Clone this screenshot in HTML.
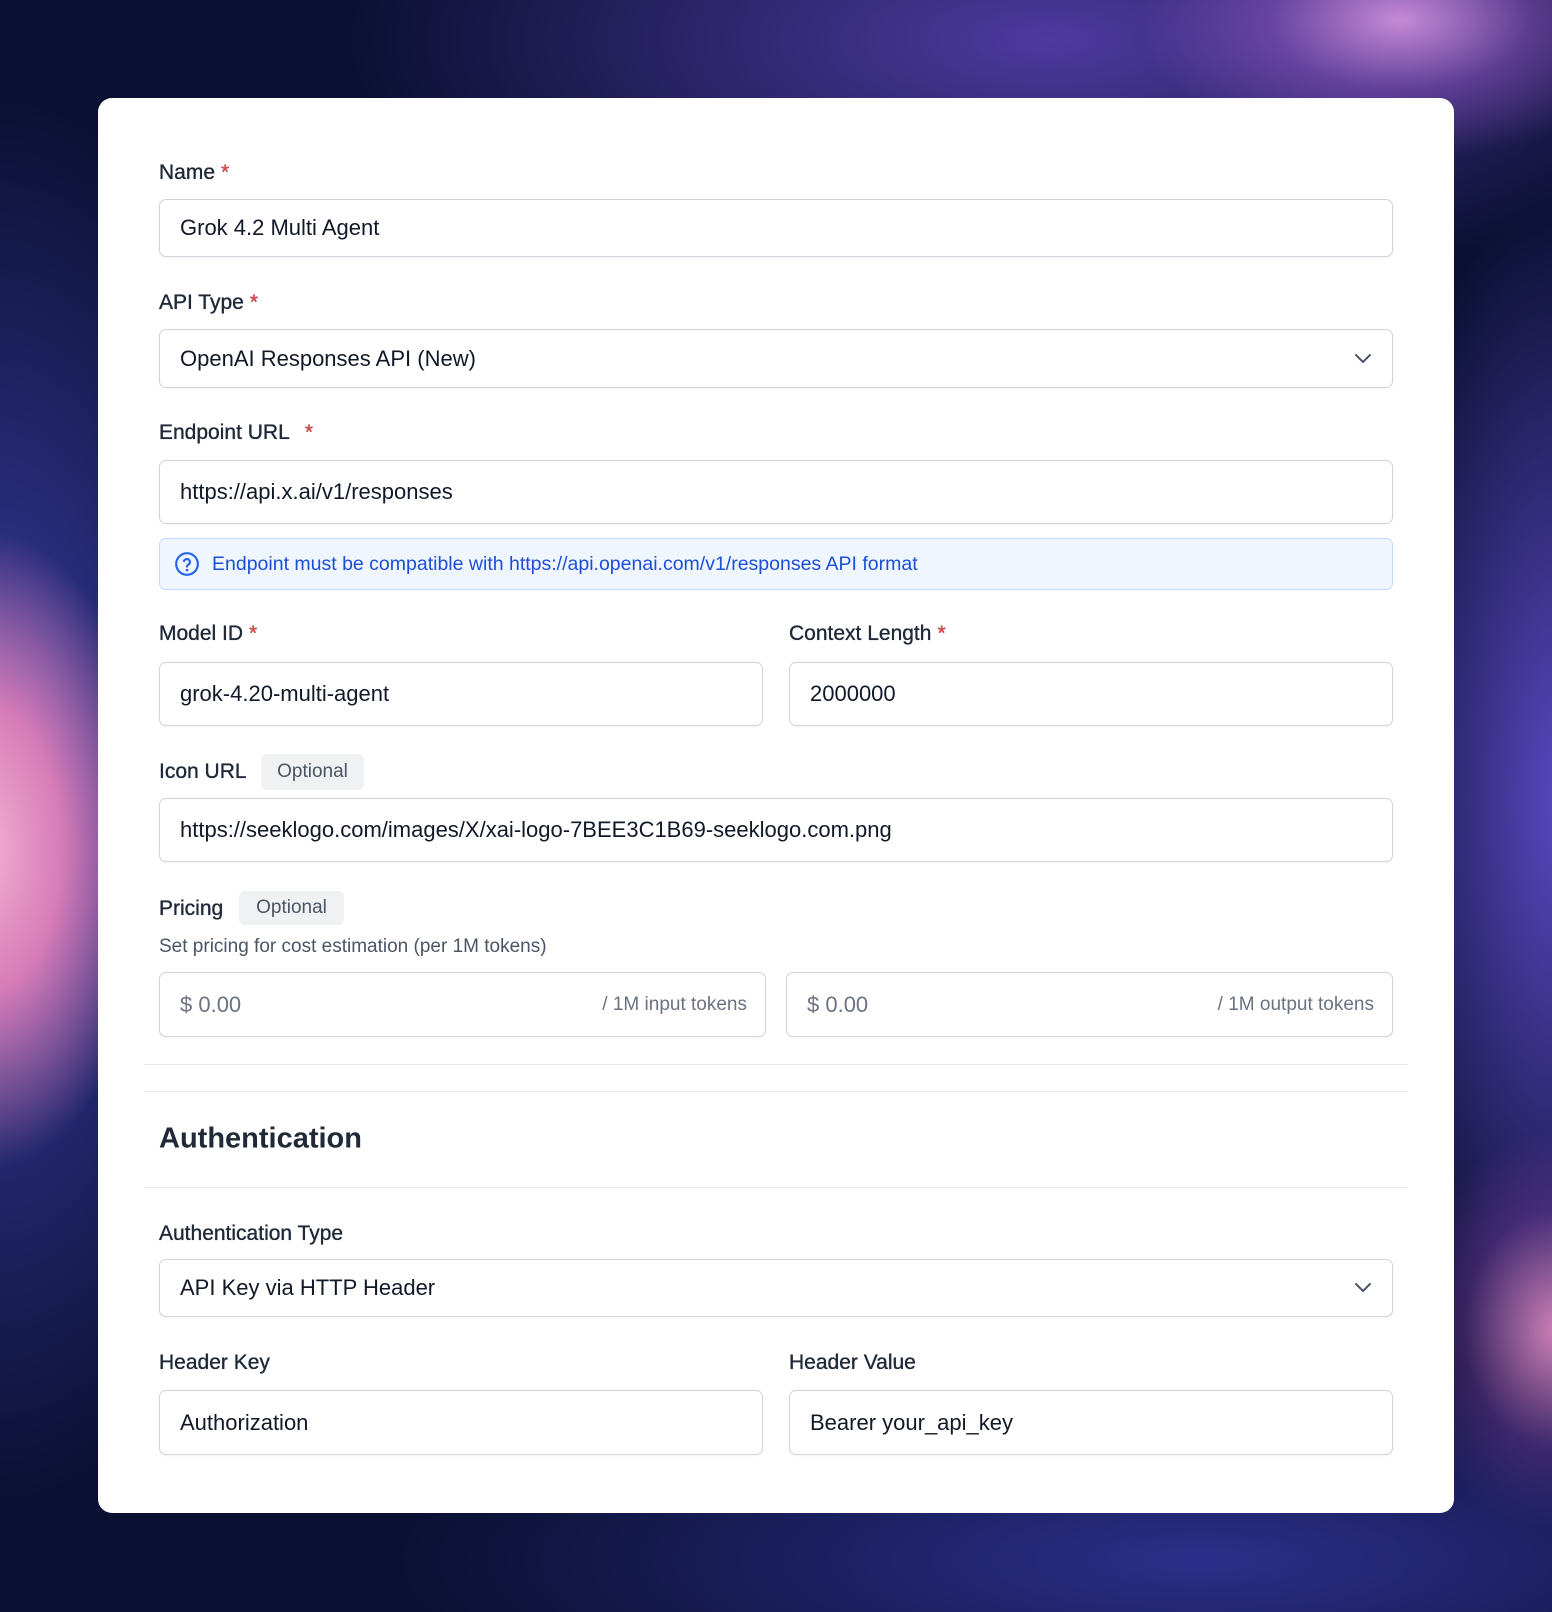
<!DOCTYPE html>
<html><head><meta charset="utf-8"><style>
*{box-sizing:border-box;margin:0;padding:0}
body{width:1552px;height:1612px;overflow:hidden;position:relative;font-family:"Liberation Sans",sans-serif;color:#1f2937;
background:
radial-gradient(ellipse 260px 140px at 1400px 20px,#c58ad6 0%,rgba(150,90,200,.5) 50%,rgba(60,40,140,0) 100%),
radial-gradient(ellipse 700px 260px at 1050px 40px,#4d3aa0 0%,rgba(40,40,120,0) 100%),
radial-gradient(ellipse 180px 320px at -20px 850px,#f4b3d4 0%,#d77cb8 45%,rgba(60,40,140,0) 100%),
radial-gradient(ellipse 300px 700px at 0px 800px,#3a3fa8 0%,rgba(20,20,80,0) 100%),
radial-gradient(ellipse 160px 200px at 1560px 1330px,#d284b8 0%,rgba(120,60,160,.4) 60%,rgba(40,30,120,0) 100%),
radial-gradient(ellipse 200px 600px at 1560px 800px,#5a47c0 0%,rgba(40,30,120,0) 100%),
radial-gradient(ellipse 800px 200px at 1200px 1560px,#2b2f8a 0%,rgba(10,10,50,0) 100%),
#0b1033;}
.card{position:absolute;left:98px;top:98px;width:1356px;height:1415px;background:#fff;border-radius:14px}
.abs{position:absolute}
.lbl{position:absolute;font-size:21px;color:#1f2937;transform:translateY(-50%);white-space:nowrap;text-shadow:0 0 0.6px #1f2937,0 0 0.3px #1f2937}
.req{color:#ef4444;margin-left:6px}
.in{position:absolute;border:1px solid #d1d5db;border-radius:7px;background:#fff;font-size:22px;color:#111827;display:flex;align-items:center;padding-left:20px;box-shadow:0 1px 2px rgba(0,0,0,.05)}
.badge{position:absolute;background:#f0f1f3;border-radius:6px;font-size:19px;color:#4b5563;display:flex;align-items:center;justify-content:center}
.chev{position:absolute;right:20px;top:50%;margin-top:-6px}
.line{position:absolute;left:46px;width:1264px;height:1px;background:#e5e7eb}
</style></head><body>
<div class="card">
<div class="lbl" style="left:61px;top:75px">Name<span class="req">*</span></div>
<div class="in" style="left:61px;top:101px;width:1234px;height:58px">Grok 4.2 Multi Agent</div>

<div class="lbl" style="left:61px;top:205px">API Type<span class="req">*</span></div>
<div class="in" style="left:61px;top:231px;width:1234px;height:59px">OpenAI Responses API (New)
<svg class="chev" width="18" height="12" viewBox="0 0 18 12"><path d="M2 2l7 7 7-7" fill="none" stroke="#4b5563" stroke-width="2" stroke-linecap="round"/></svg></div>

<div class="lbl" style="left:61px;top:335px">Endpoint URL <span class="req" style="margin-left:10px">*</span></div>
<div class="in" style="left:61px;top:362px;width:1234px;height:64px">https://api.x.ai/v1/responses</div>

<div class="abs" style="left:61px;top:440px;width:1234px;height:52px;background:#eff6ff;border:1px solid #bfdbfe;border-radius:7px;display:flex;align-items:center;padding-left:14px;color:#1d4ed8;font-size:19.5px">
<svg width="26" height="26" viewBox="0 0 24 24" style="margin-right:12px"><circle cx="12" cy="12" r="10" fill="none" stroke="#2563eb" stroke-width="2"/><path d="M9.2 9.3a2.9 2.9 0 0 1 5.6 1c0 1.9-2.8 2.4-2.8 4" fill="none" stroke="#2563eb" stroke-width="2" stroke-linecap="round"/><circle cx="12" cy="17.6" r="1.2" fill="#2563eb"/></svg>
Endpoint must be compatible with https://api.openai.com/v1/responses API format</div>

<div class="lbl" style="left:61px;top:536px">Model ID<span class="req">*</span></div>
<div class="lbl" style="left:691px;top:536px">Context Length<span class="req">*</span></div>
<div class="in" style="left:61px;top:564px;width:604px;height:64px">grok-4.20-multi-agent</div>
<div class="in" style="left:691px;top:564px;width:604px;height:64px">2000000</div>

<div class="lbl" style="left:61px;top:674px">Icon URL</div>
<div class="badge" style="left:163px;top:656px;width:103px;height:36px">Optional</div>
<div class="in" style="left:61px;top:700px;width:1234px;height:64px">https://seeklogo.com/images/X/xai-logo-7BEE3C1B69-seeklogo.com.png</div>

<div class="lbl" style="left:61px;top:811px">Pricing</div>
<div class="badge" style="left:141px;top:793px;width:105px;height:34px">Optional</div>
<div class="lbl" style="left:61px;top:849px;font-size:19px;color:#4b5563;text-shadow:none">Set pricing for cost estimation (per 1M tokens)</div>
<div class="in" style="left:61px;top:874px;width:607px;height:65px;color:#6b7280">$ 0.00<span style="position:absolute;right:18px;font-size:19px">/ 1M input tokens</span></div>
<div class="in" style="left:688px;top:874px;width:607px;height:65px;color:#6b7280">$ 0.00<span style="position:absolute;right:18px;font-size:19px">/ 1M output tokens</span></div>

<div class="line" style="top:966px"></div>
<div class="line" style="top:993px"></div>
<div class="lbl" style="left:61px;top:1041px;font-size:29px;font-weight:700;color:#1f2937;text-shadow:none">Authentication</div>
<div class="line" style="top:1089px"></div>

<div class="lbl" style="left:61px;top:1136px">Authentication Type</div>
<div class="in" style="left:61px;top:1161px;width:1234px;height:58px">API Key via HTTP Header
<svg class="chev" width="18" height="12" viewBox="0 0 18 12"><path d="M2 2l7 7 7-7" fill="none" stroke="#4b5563" stroke-width="2" stroke-linecap="round"/></svg></div>

<div class="lbl" style="left:61px;top:1265px">Header Key</div>
<div class="lbl" style="left:691px;top:1265px">Header Value</div>
<div class="in" style="left:61px;top:1292px;width:604px;height:65px">Authorization</div>
<div class="in" style="left:691px;top:1292px;width:604px;height:65px">Bearer your_api_key</div>
</div>
</body></html>
